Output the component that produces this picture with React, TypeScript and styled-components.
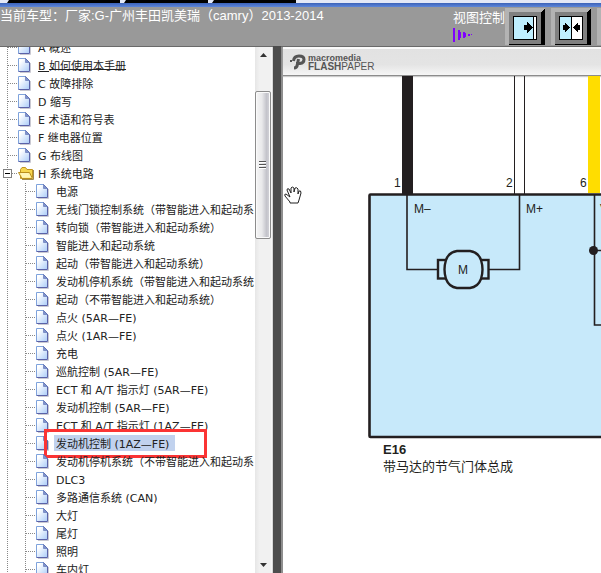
import React from "react";
import styled, { createGlobalStyle, css } from "styled-components";

const GlobalStyle = createGlobalStyle`
  * { box-sizing: border-box; }
  body {
    margin: 0;
    overflow: hidden;
    background: #fff;
    font-family: "DejaVu Sans", "Noto Sans CJK SC", sans-serif;
    font-size: 11px;
    color: #222;
  }
  button { padding: 0; border: 0; background: none; cursor: pointer; }
`;

const sans = `"Liberation Sans", "Noto Sans CJK SC", sans-serif`;

const Page = styled.div`
  display: flex;
  flex-direction: column;
  height: 100vh;
`;

const TabStrip = styled.div`
  display: flex;
  flex: none;
  gap: 4px;
  height: 7px;
  padding: 0 0 4px 7px;
  background: linear-gradient(#3c62b8, #5d86da) 0 100% / 100% 4px no-repeat, #e4e8f6;
`;

const Tab = styled.div<{ $wide?: boolean }>`
  width: ${(p) => (p.$wide ? 113 : 84)}px;
  background: #000;
  clip-path: polygon(2px 0, 100% 0, 100% 100%, 0 100%);
`;

const Header = styled.header`
  display: flex;
  flex: none;
  height: 40px;
  overflow: hidden;
  background: #999;
  border-bottom: 1px solid #6a6a6a;
  color: #fff;
  font-family: ${sans};
  font-size: 13px;
  line-height: 16px;
`;

const Title = styled.h1`
  flex: 1 0 0;
  min-width: 0;
  margin: 0;
  padding-top: 1px;
  overflow: hidden;
  font: inherit;
  white-space: nowrap;
`;

const Toolbar = styled.div`
  display: flex;
  flex: none;
  width: 148px;
  gap: 6px;
  overflow: hidden;
`;

const ViewControl = styled.div`
  display: flex;
  flex: none;
  flex-direction: column;
  width: 46px;
  margin-top: 3px;
  white-space: nowrap;
  svg { margin-top: 1px; }
`;

const ViewButton = styled.button`
  flex: none;
  width: 40px;
  height: 39px;
  svg { display: block; }
`;

const Main = styled.main`
  display: flex;
  flex: 1;
  min-height: 0;
`;

const Sidebar = styled.nav`
  display: flex;
  flex: none;
  width: 273px;
  padding-right: 2px;
  background: linear-gradient(to left, #d8d8d8 1px, #f6f6f6 1px);
`;

const TreeView = styled.div`
  flex: 1;
  min-width: 0;
  overflow: hidden;
  border-right: 1px solid #fff;
  background: #fff;
`;

const dots = (dir: string) =>
  `repeating-linear-gradient(${dir}, #888 0 1px, transparent 1px 2px)`;

const Tree = styled.ul<{ $nested?: boolean }>`
  margin: ${(p) => (p.$nested ? "0" : "-8px 0 0")};
  padding: 0 0 0 ${(p) => (p.$nested ? 18 : 0)}px;
  list-style: none;
`;

const Node = styled.li`
  background: ${dots("to bottom")} 7px 0 / 1px 100% no-repeat;
`;

const Row = styled.div`
  position: relative;
  display: flex;
  align-items: flex-start;
  height: 18px;
`;

const Lead = styled.span<{ $open?: boolean }>`
  display: flex;
  flex: none;
  width: 17px;
  height: 18px;
  padding-left: ${(p) => (p.$open ? 3 : 8)}px;
  margin-right: 1px;
`;

const Stub = styled.span`
  flex: 1;
  background: ${dots("to right")} 0 8px / 100% 1px no-repeat;
`;

const Expander = styled.button`
  width: 9px;
  height: 9px;
  margin-top: 4px;
  border: 1px solid #808080;
  background: linear-gradient(#000, #000) center / 5px 1px no-repeat, #fff;
`;

const IconSlot = styled.span`
  flex: none;
  width: 18px;
  height: 18px;
  padding-top: 1px;
  svg { display: block; }
`;

const Label = styled.a<{ $selected?: boolean; $hovered?: boolean }>`
  flex: none;
  height: 16px;
  padding: 1px 6px 0 2px;
  color: #222;
  line-height: 18px;
  white-space: nowrap;
  text-decoration: none;
  ${(p) => p.$selected && css`background: #c1d2ee;`}
`;

const Underlined = styled.span<{ $raised?: boolean }>`
  text-decoration: underline;
  text-decoration-thickness: 1px;
  text-decoration-skip-ink: none;
  text-underline-offset: ${(p) => (p.$raised ? -1 : 1)}px;
`;

const Marker = styled.span`
  position: absolute;
  top: -6px;
  left: 26px;
  width: 163px;
  height: 29px;
  border: 3px solid #fb3434;
  pointer-events: none;
`;

const ScrollBar = styled.div`
  display: flex;
  flex: none;
  flex-direction: column;
  width: 16px;
  background: linear-gradient(to right, #e6e6e6, #f1f1f1 30%, #f1f1f1);
`;

const ScrollArrow = styled.button`
  display: grid;
  flex: none;
  height: 16px;
  place-items: center;
`;

const Track = styled.div`
  flex: 1;
  padding-top: 28px;
`;

const Thumb = styled.div`
  display: grid;
  height: 148px;
  place-items: center;
  border: 1px solid #8c8c8c;
  border-radius: 2px;
  background: linear-gradient(to right, #f5f5f5, #e9e9eb 42%, #c4c4cb 75%, #d5d5da);
  box-shadow: inset 0 0 0 1px #fafafa;
`;

const Divider = styled.div`
  flex: none;
  width: 8px;
  margin-top: -1px;
  background: #4d4d4d;
`;

const Viewer = styled.section`
  display: flex;
  flex: 1;
  flex-direction: column;
  min-width: 0;
  border-left: 2px solid #8e8e8e;
  background: #fff;
`;

const PaperBar = styled.div`
  display: flex;
  flex: none;
  align-items: center;
  gap: 2px;
  height: 29px;
  padding-left: 7px;
  border-top: 2px solid #fafafa;
  border-bottom: 1px solid #8c8c8c;
  background: linear-gradient(#e2e2e2, #e4e4e4 60%, #f6f6f6);
  box-shadow: 0 1px 1px #ccc;
`;

const Brand = styled.div`
  color: #555;
  font-family: ${sans};
  font-size: 10px;
  line-height: 9px;
`;

const BrandTop = styled.div`
  font-size: 9px;
  font-weight: bold;
  line-height: 8px;
`;

const Canvas = styled.svg`
  display: block;
  flex: 1;
  width: 100%;
  min-height: 0;
  font-family: ${sans};
  font-size: 12px;
  fill: #231f20;
`;

const PageIcon = () => (
  <svg width="14" height="15" viewBox="0 0 14 15" aria-hidden="true">
    <defs>
      <linearGradient id="sheet" x1="0" y1="0" x2="1" y2="1">
        <stop offset="0.2" stopColor="#fff" />
        <stop offset="1" stopColor="#a9cbf8" />
      </linearGradient>
    </defs>
    <path d="M2 14.5H12.5V5" fill="none" stroke="#c9c9d2" />
    <path d="M.5.5H7.5L11.5 4.5V13.5H.5Z" fill="url(#sheet)" />
    <path d="M.5 13.5V.5H7.5" fill="none" stroke="#7fa3dc" />
    <path d="M.5 13.5H11.5V4.5L7.5.5" fill="none" stroke="#5a62a8" />
    <path d="M7.5.5V4.5H11.5Z" fill="#7f93cc" stroke="#5a6fb4" strokeWidth=".6" />
  </svg>
);

const FolderIcon = () => (
  <svg width="17" height="15" viewBox="0 0 17 15" aria-hidden="true">
    <path d="M2.5 12.5V3.5L4 1.5H7.5L9 3.5H14.500V11.5Z" fill="#f6d64e" stroke="#c09422" />
    <path d="M.5 6.5H11.5L14.5 12.5H4Z" fill="#fff09a" stroke="#b98f1f" />
    <path d="M3 8H10.5M4 10H12" stroke="#fffbd5" />
    <path d="M4 13.5H15.5V4" fill="none" stroke="#a08a50" />
  </svg>
);

type Item = { text: string; selected?: boolean; hovered?: boolean; children?: Item[] };

const tree: Item[] = [
  { text: "A 概述" },
  { text: "B 如何使用本手册", hovered: true },
  { text: "C 故障排除" },
  { text: "D 缩写" },
  { text: "E 术语和符号表" },
  { text: "F 继电器位置" },
  { text: "G 布线图" },
  {
    text: "H 系统电路",
    children: [
      { text: "电源" },
      { text: "无线门锁控制系统（带智能进入和起动系统）" },
      { text: "转向锁（带智能进入和起动系统）" },
      { text: "智能进入和起动系统" },
      { text: "起动（带智能进入和起动系统）" },
      { text: "发动机停机系统（带智能进入和起动系统）" },
      { text: "起动（不带智能进入和起动系统）" },
      { text: "点火 (5AR—FE)" },
      { text: "点火 (1AR—FE)" },
      { text: "充电" },
      { text: "巡航控制 (5AR—FE)" },
      { text: "ECT 和 A/T 指示灯 (5AR—FE)" },
      { text: "发动机控制 (5AR—FE)" },
      { text: "ECT 和 A/T 指示灯 (1AZ—FE)" },
      { text: "发动机控制 (1AZ—FE)", selected: true },
      { text: "发动机停机系统（不带智能进入和起动系统）" },
      { text: "DLC3" },
      { text: "多路通信系统 (CAN)" },
      { text: "大灯" },
      { text: "尾灯" },
      { text: "照明" },
      { text: "车内灯" },
    ],
  },
];

const TreeNode = ({ item }: { item: Item }) => {
  const open = Boolean(item.children);
  return (
    <Node>
      <Row>
        <Lead $open={open}>
          {open && <Expander type="button" aria-label={`折叠 ${item.text}`} aria-expanded />}
          <Stub />
        </Lead>
        <IconSlot>{open ? <FolderIcon /> : <PageIcon />}</IconSlot>
        <Label href="#" $selected={item.selected}>
          {item.hovered ? (
            <>
              <Underlined>{item.text.slice(0, 2)}</Underlined>
              <Underlined $raised>{item.text.slice(2)}</Underlined>
            </>
          ) : (
            item.text
          )}
        </Label>
        {item.selected && <Marker />}
      </Row>
      {item.children && (
        <Tree $nested>
          {item.children.map((child) => <TreeNode key={child.text} item={child} />)}
        </Tree>
      )}
    </Node>
  );
};

const ViewFrame = ({ children }: { children: React.ReactNode }) => (
  <svg width="40" height="39" viewBox="0 0 40 39" shapeRendering="crispEdges" aria-hidden="true">
    <path d="M0 1H40V38H0Z" fill="#b3b3b3" />
    <path d="M4 38V37L36 5L40 1V38Z" fill="#000" />
    <path d="M4 5H36V37H4Z" fill="#808080" />
    {children}
  </svg>
);

const ViewIcon = ({ kind }: { kind: "right" | "split" }) => (
  <ViewFrame>
    <path d="M8.5 9.5H31.5V32.5H8.5Z" fill="#fff" stroke="#000" />
    {kind === "right" ? (
      <>
        <path d="M9 10H28V32H9Z" fill="#bfefff" />
        <path d="M28.5 10V32" stroke="#000" />
        <path d="M19 18H22V15L27.5 20.5L22 26V23H19Z" />
      </>
    ) : (
      <>
        <path d="M9 10H20V32H9Z" fill="#bfefff" />
        <path d="M20.5 10V32" stroke="#000" />
        <path d="M12 18H14V15L19 20.5L14 26V23H12Z" />
        <path d="M29 18H27V15L22 20.5L27 26V23H29Z" />
      </>
    )}
  </ViewFrame>
);

const Diagram = () => (
  <Canvas role="img" aria-label="E16 带马达的节气门体总成">
    <g transform="translate(-283 -76)">
      <rect x="369.5" y="194.5" width="2000" height="242.5" rx="1" fill="#c7e9fa" stroke="#231f20" strokeWidth="2.6" />
      <rect x="402" y="76" width="11" height="118" />
      <path d="M514.5 76V194M524.5 76V194" stroke="#231f20" />
      <rect x="588" y="76" width="12" height="117" fill="#ffdd00" />
      <g fill="none" stroke="#231f20" strokeWidth="1.6">
        <path d="M407 195V269.5H438M489 269.5H519.5V195" />
        <path d="M594.5 195V325H2000M594.5 250.5H2000" />
      </g>
      <g fill="#c7e9fa" stroke="#231f20" strokeWidth="2.4">
        <rect x="438" y="260" width="9" height="18.5" />
        <rect x="480" y="260" width="8.5" height="18.5" />
        <path d="M457 251H470Q478 252 481 260Q484 269.5 481 279Q478 287 470 288H457Q449 287 446 279Q443 269.5 446 260Q449 252 457 251Z" />
      </g>
      <circle cx="593.5" cy="250.5" r="4.5" />
      <text x="394" y="187">1</text>
      <text x="506" y="187">2</text>
      <text x="580" y="187">6</text>
      <text x="414" y="213">M–</text>
      <text x="526" y="213">M+</text>
      <text x="600" y="213">V</text>
      <text x="458" y="274">M</text>
      <text x="383" y="454" fontSize="13" fontWeight="bold">E16</text>
      <text x="383" y="471" fontSize="13">带马达的节气门体总成</text>
      <path
        d="M290 202L285 196Q284 194 286 194L290 197L287 190Q287 188 289 189L291 193V188Q292 186 294 188V192L295 188Q297 187 298 189V194L299 191Q301 190 301 193L299 200L298 203H290Z"
        fill="#fff" stroke="#222" strokeWidth="1"
      />
    </g>
  </Canvas>
);

export default function App() {
  return (
    <Page>
      <GlobalStyle />
      <TabStrip><Tab $wide /><Tab /><Tab /></TabStrip>
      <Header>
        <Title>当前车型：厂家:G-广州丰田凯美瑞（camry）2013-2014</Title>
        <Toolbar>
          <ViewControl>
            视图控制
            <svg width="20" height="16" viewBox="0 0 20 16" fill="#8000ff" shapeRendering="crispEdges" aria-hidden="true">
              <path d="M0 1H2V15H0ZM5 3H7V13H5ZM7 5H8V11H7ZM10 5H12V11H10ZM12 6H13V10H12ZM15 7H17V9H15ZM18 7H19V8H18Z" />
            </svg>
          </ViewControl>
          <ViewButton type="button" aria-label="展开目录"><ViewIcon kind="right" /></ViewButton>
          <ViewButton type="button" aria-label="分栏视图"><ViewIcon kind="split" /></ViewButton>
          <ViewButton type="button" aria-label="展开内容"><ViewIcon kind="right" /></ViewButton>
        </Toolbar>
      </Header>
      <Main>
        <Sidebar>
          <TreeView>
            <Tree>{tree.map((item) => <TreeNode key={item.text} item={item} />)}</Tree>
          </TreeView>
          <ScrollBar>
            <ScrollArrow type="button" aria-label="向上滚动">
              <svg width="7" height="4" viewBox="0 0 7 4"><path d="M0 4L3.5 0L7 4Z" fill="#333" /></svg>
            </ScrollArrow>
            <Track>
              <Thumb>
                <svg width="8" height="9" viewBox="0 0 8 9" shapeRendering="crispEdges">
                  <path d="M0 .5H7M0 3.5H7M0 6.5H7" stroke="#555" />
                  <path d="M0 1.5H7M0 4.5H7M0 7.5H7" stroke="#fff" />
                </svg>
              </Thumb>
            </Track>
            <ScrollArrow type="button" aria-label="向下滚动">
              <svg width="7" height="4" viewBox="0 0 7 4"><path d="M0 0H7L3.5 4Z" fill="#333" /></svg>
            </ScrollArrow>
          </ScrollBar>
        </Sidebar>
        <Divider />
        <Viewer>
          <PaperBar>
            <svg width="16" height="16" viewBox="0 0 16 16" aria-hidden="true">
              <path d="M4 14Q7 14 7.5 10L8.500 5M3.5 7Q4 2 9 2Q14 2 14 5.5Q14 9 10 9.5H6" fill="none" stroke="#555" strokeWidth="3" />
              <rect x="0" y="6" width="2" height="2" fill="#555" />
            </svg>
            <Brand>
              <BrandTop>macromedia</BrandTop>
              <b>FLASH</b>PAPER
            </Brand>
          </PaperBar>
          <Diagram />
        </Viewer>
      </Main>
    </Page>
  );
}
